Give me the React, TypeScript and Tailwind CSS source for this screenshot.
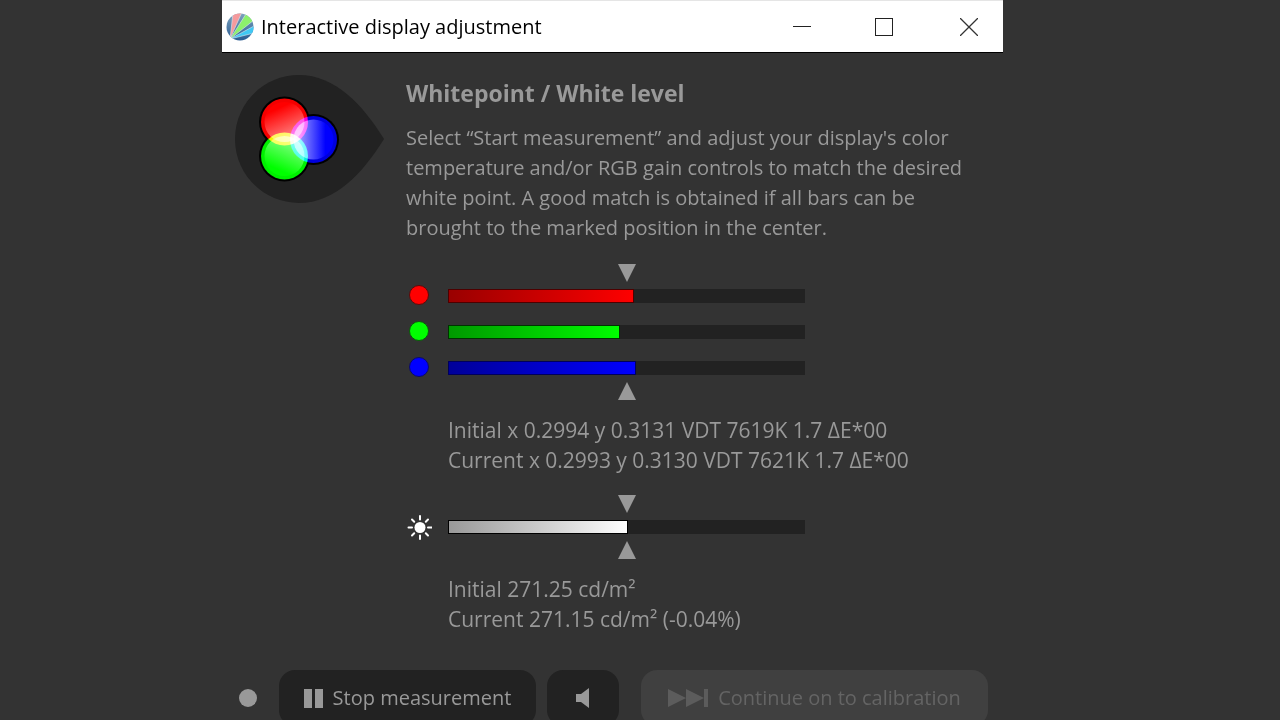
import React from 'react';

type Meter = {
  label: string;
  value: number;
  dot: string;
  fill: string;
};

const RGB_METERS: Meter[] = [
  {
    label: 'Red gain',
    value: 52,
    dot: 'bg-[#ff0000] border-[#5c0a0a]',
    fill: 'bg-linear-to-r from-[#990000] to-[#ff0000] border-[#4d0000]',
  },
  {
    label: 'Green gain',
    value: 48.3,
    dot: 'bg-[#00ff00] border-[#0a5c0a]',
    fill: 'bg-linear-to-r from-[#009900] to-[#00ff00] border-[#003300]',
  },
  {
    label: 'Blue gain',
    value: 52.7,
    dot: 'bg-[#0000ff] border-[#0a0a6e]',
    fill: 'bg-linear-to-r from-[#000099] to-[#0000ff] border-[#00005c]',
  },
];

const AppIcon = () => (
  <svg viewBox="0 0 28 28" className="size-7 shrink-0" aria-hidden="true">
    <defs>
      <clipPath id="disc">
        <circle cx="14" cy="14" r="13.5" />
      </clipPath>
      <linearGradient id="disc-bg" x1="0" y1="0" x2="0" y2="1">
        <stop offset="0" stopColor="#7fa3bd" />
        <stop offset="1" stopColor="#265a92" />
      </linearGradient>
    </defs>
    <g clipPath="url(#disc)">
      <rect width="28" height="28" fill="url(#disc-bg)" />
      <path d="M4 26 L7 0 L16 -1 Z" fill="#f59a9d" />
      <path d="M4 26 L20 1 L28 7 Z" fill="#8cf06c" />
      <path d="M4 26 L28 13 L28 20 Z" fill="#3fc8f4" />
      <g stroke="#dcebf2" strokeWidth="0.6">
        <path d="M4 26 L7 0" />
        <path d="M4 26 L16 -1" />
        <path d="M4 26 L20 1" />
        <path d="M4 26 L28 7" />
        <path d="M4 26 L28 13" />
        <path d="M4 26 L28 20" />
      </g>
    </g>
  </svg>
);

const WhitepointIcon = () => (
  <svg viewBox="0 0 149 128" className="w-[149px] h-32 shrink-0" aria-hidden="true">
    <defs>
      <linearGradient id="red-ball" x1="0.3" y1="0" x2="0.75" y2="1">
        <stop offset="0.15" stopColor="#ff0000" />
        <stop offset="1" stopColor="#ff9a9a" />
      </linearGradient>
      <linearGradient id="green-ball" x1="0.3" y1="1" x2="0.75" y2="0">
        <stop offset="0.15" stopColor="#00ff00" />
        <stop offset="1" stopColor="#9aff9a" />
      </linearGradient>
      <linearGradient id="blue-ball" x1="1" y1="0" x2="0" y2="0">
        <stop offset="0.2" stopColor="#0000ff" />
        <stop offset="0.85" stopColor="#9a9aff" />
      </linearGradient>
    </defs>
    <path
      d="M64 0 C100 0 128 30 149 64 C128 98 100 128 64 128 C28 128 0 99 0 64 C0 29 28 0 64 0 Z"
      fill="#222222"
    />
    <g fill="#000000">
      <circle cx="49.5" cy="47" r="25.5" />
      <circle cx="78.5" cy="64.5" r="25.5" />
      <circle cx="49.5" cy="81" r="25.5" />
    </g>
    <g style={{ isolation: 'isolate' }}>
      <g className="mix-blend-screen">
        <circle cx="49.5" cy="47" r="23.5" fill="#f40000" />
        <circle cx="49.5" cy="47" r="20" fill="url(#red-ball)" />
      </g>
      <g className="mix-blend-screen">
        <circle cx="78.5" cy="64.5" r="23.5" fill="#0000dd" />
        <circle cx="78.5" cy="64.5" r="20" fill="url(#blue-ball)" />
      </g>
      <g className="mix-blend-screen">
        <circle cx="49.5" cy="81" r="23.5" fill="#00f000" />
        <circle cx="49.5" cy="81" r="20" fill="url(#green-ball)" />
      </g>
    </g>
  </svg>
);

const SunIcon = () => (
  <svg viewBox="0 0 26 26" className="size-[26px] shrink-0" aria-hidden="true">
    <circle cx="14" cy="13.5" r="5.5" fill="#ffffff" />
    <g stroke="#ffffff" strokeWidth="2" strokeLinecap="round">
      <path d="M14 2v3.5M14 21.5v3.5M2.5 13.5h3.5M22 13.5h3.5" />
      <path d="M6 5.5l2.2 2.2M19.8 19.3l2.2 2.2M22 5.5l-2.2 2.2M8.2 19.3L6 21.5" />
    </g>
  </svg>
);

const Marker = ({ up = false }: { up?: boolean }) => (
  <div className="flex w-full max-w-[357px] justify-center">
    <svg viewBox="0 0 18 18" className="size-[18px]" fill="#999999" aria-hidden="true">
      <path d={up ? 'M9 0 L18 18 H0 Z' : 'M0 0 H18 L9 18 Z'} />
    </svg>
  </div>
);

const MeterBar = ({ label, value, fill }: Omit<Meter, 'dot'>) => (
  <div
    role="meter"
    aria-label={label}
    aria-valuemin={0}
    aria-valuemax={100}
    aria-valuenow={value}
    className="h-3.5 w-full max-w-[357px] bg-[#222222]"
  >
    <div className={`h-full border bg-origin-border ${fill}`} style={{ width: `${value}%` }} />
  </div>
);

const TitleBar = () => (
  <header className="flex h-[53px] items-center justify-between border-t border-b border-t-[#e5e5e5] border-b-black bg-white pl-1 pr-[25px] text-black">
    <div className="flex items-center gap-[7px]">
      <AppIcon />
      <h1 className="leading-[30px] whitespace-nowrap">Interactive display adjustment</h1>
    </div>
    <div className="flex items-center gap-16">
      <button type="button" aria-label="Minimize">
        <svg viewBox="0 0 18 18" className="size-[18px]" stroke="#222222" fill="none">
          <path d="M0 8.5h18" />
        </svg>
      </button>
      <button type="button" aria-label="Maximize">
        <svg viewBox="0 0 18 18" className="size-[18px]" stroke="#222222" fill="none">
          <rect x="0.5" y="0.5" width="17" height="17" />
        </svg>
      </button>
      <button type="button" aria-label="Close" className="pl-[3px]">
        <svg viewBox="0 0 18 18" className="size-[18px]" stroke="#333333" strokeWidth="1.3" fill="none">
          <path d="M0 0l18 18M18 0L0 18" />
        </svg>
      </button>
    </div>
  </header>
);

const App: React.FC = () => {
  return (
    <div className="h-screen overflow-hidden bg-[#333333] pl-[222px] font-['Open_Sans','Noto_Sans',sans-serif] text-[20px] leading-[30px] text-[#999999]">
      <div className="w-full max-w-[781px]">
        <TitleBar />

        <main className="flex gap-[22px] px-[13px] pt-[22px]">
          <WhitepointIcon />

          <div className="min-w-0 flex-1 pt-[3px]">
            <h2 className="text-[23px] leading-[30px] font-bold">Whitepoint / White level</h2>
            <p className="mt-[15px] whitespace-nowrap">
              Select “Start measurement” and adjust your display's color
              <br />
              temperature and/or RGB gain controls to match the desired
              <br />
              white point. A good match is obtained if all bars can be
              <br />
              brought to the marked position in the center.
            </p>

            <section className="mt-[21px] grid grid-cols-[26px_1fr] gap-x-4">
              <div className="col-start-2">
                <Marker />
              </div>
              <div className="col-span-2 my-[7px] flex flex-col gap-[22px]">
                {RGB_METERS.map((meter) => (
                  <div key={meter.label} className="flex h-3.5 items-center gap-4">
                    <div className="flex w-[26px] shrink-0 justify-center pb-[2px]">
                      <span className={`size-5 rounded-full border ${meter.dot}`}></span>
                    </div>
                    <MeterBar label={meter.label} value={meter.value} fill={meter.fill} />
                  </div>
                ))}
              </div>
              <div className="col-start-2">
                <Marker up />
                <p className="mt-[15px] text-[21px] leading-[30px] whitespace-nowrap">
                  Initial x 0.2994 y 0.3131 VDT 7619K 1.7 ΔE*00
                  <br />
                  Current x 0.2993 y 0.3130 VDT 7621K 1.7 ΔE*00
                </p>
              </div>
            </section>

            <section className="mt-5 grid grid-cols-[26px_1fr] gap-x-4">
              <div className="col-start-2">
                <Marker />
              </div>
              <div className="col-span-2 my-[7px] flex h-3.5 items-center gap-4">
                <SunIcon />
                <MeterBar
                  label="White level"
                  value={50.3}
                  fill="bg-linear-to-r from-[#999999] to-[#ffffff] border-black"
                />
              </div>
              <div className="col-start-2">
                <Marker up />
                <p className="mt-[15px] text-[21px] leading-[30px] whitespace-nowrap">
                  Initial 271.25 cd/m²
                  <br />
                  Current 271.15 cd/m² (-0.04%)
                </p>
              </div>
            </section>
          </div>
        </main>

        <footer className="mt-9 flex items-center pl-[17px] pr-[15px]">
          <span className="mr-[22px] size-[18px] shrink-0 rounded-full bg-[#999999]"></span>
          <button
            type="button"
            className="mr-[11px] flex h-14 w-[257px] items-center justify-center gap-[10px] rounded-2xl bg-[#222222] whitespace-nowrap"
          >
            <svg viewBox="0 0 19 19" className="size-[19px]" fill="#999999" aria-hidden="true">
              <path d="M0 0h8v19H0zM11 0h8v19h-8z" />
            </svg>
            Stop measurement
          </button>
          <button
            type="button"
            aria-label="Sound"
            className="mr-[22px] flex h-14 w-[72px] items-center justify-center rounded-2xl bg-[#222222]"
          >
            <svg viewBox="0 0 14 20" className="h-5 w-3.5" fill="#999999" aria-hidden="true">
              <path d="M0 6h5L13 0v20L5 14H0z" />
            </svg>
          </button>
          <button
            type="button"
            disabled
            className="flex h-14 flex-1 items-center justify-center gap-[10px] rounded-2xl bg-[#404040] whitespace-nowrap text-[#646464]"
          >
            <svg viewBox="0 0 40 18" className="h-[18px] w-10" fill="#5c5c5c" aria-hidden="true">
              <path d="M0 0l18 9-18 9zM18 0l18 9-18 9zM36 0h4v18h-4z" />
            </svg>
            Continue on to calibration
          </button>
        </footer>
      </div>
    </div>
  );
};

export default App;
